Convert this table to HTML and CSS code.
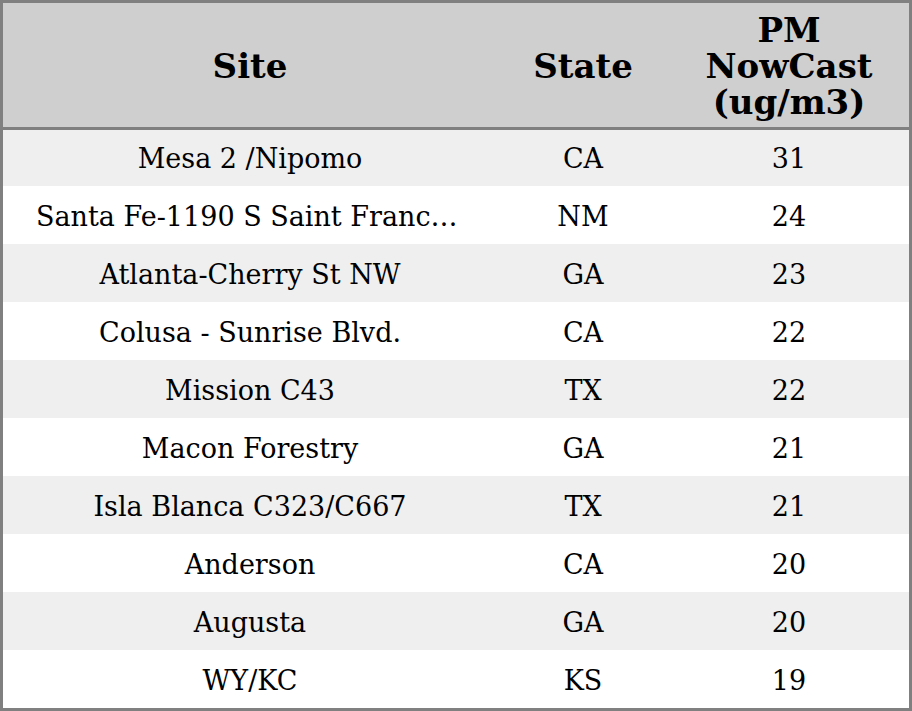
FILE: index.html
```html
<!DOCTYPE html>
<html>
<head>
<meta charset="utf-8">
<link rel="stylesheet" href="styles.css">
</head>
<body>
<div class="frame">
<table class="grid">
<colgroup><col class="c-site"><col class="c-state"><col class="c-pm"></colgroup>
<thead>
<tr><th>Site</th><th>State</th><th>PM<br>NowCast<br>(ug/m3)</th></tr>
</thead>
<tbody>
<tr><td>Mesa 2 /Nipomo</td><td>CA</td><td>31</td></tr>
<tr><td>Santa Fe-1190 S Saint Francis Drive</td><td>NM</td><td>24</td></tr>
<tr><td>Atlanta-Cherry St NW</td><td>GA</td><td>23</td></tr>
<tr><td>Colusa - Sunrise Blvd.</td><td>CA</td><td>22</td></tr>
<tr><td>Mission C43</td><td>TX</td><td>22</td></tr>
<tr><td>Macon Forestry</td><td>GA</td><td>21</td></tr>
<tr><td>Isla Blanca C323/C667</td><td>TX</td><td>21</td></tr>
<tr><td>Anderson</td><td>CA</td><td>20</td></tr>
<tr><td>Augusta</td><td>GA</td><td>20</td></tr>
<tr><td>WY/KC</td><td>KS</td><td>19</td></tr>
</tbody>
</table>
</div>
</body>
</html>
```
FILE: styles.css
```css
html, body { margin: 0; padding: 0; background: #fff; }
.frame {
  width: 906px;
  border: 3px solid #808080;
  font-family: "DejaVu Serif", serif;
  color: #000;
}
.grid {
  width: 906px;
  border-collapse: collapse;
  table-layout: fixed;
}
.c-site { width: 494px; }
.c-state { width: 172px; }
.c-pm { width: 240px; }
.grid th {
  background: #cfcfcf;
  font-size: 34px;
  font-weight: bold;
  line-height: 36px;
  height: 125px;
  padding: 2px 8px 0;
  box-sizing: border-box;
  text-align: center;
  vertical-align: middle;
  border-bottom: 3px solid #808080;
}
.grid td {
  font-size: 27px;
  line-height: 30px;
  height: 58px;
  padding: 3px 33px 0;
  box-sizing: border-box;
  text-align: center;
  vertical-align: middle;
  white-space: nowrap;
  overflow: hidden;
  text-overflow: ellipsis;
}
.grid tbody tr:nth-child(odd) td { background: #efefef; }
```
